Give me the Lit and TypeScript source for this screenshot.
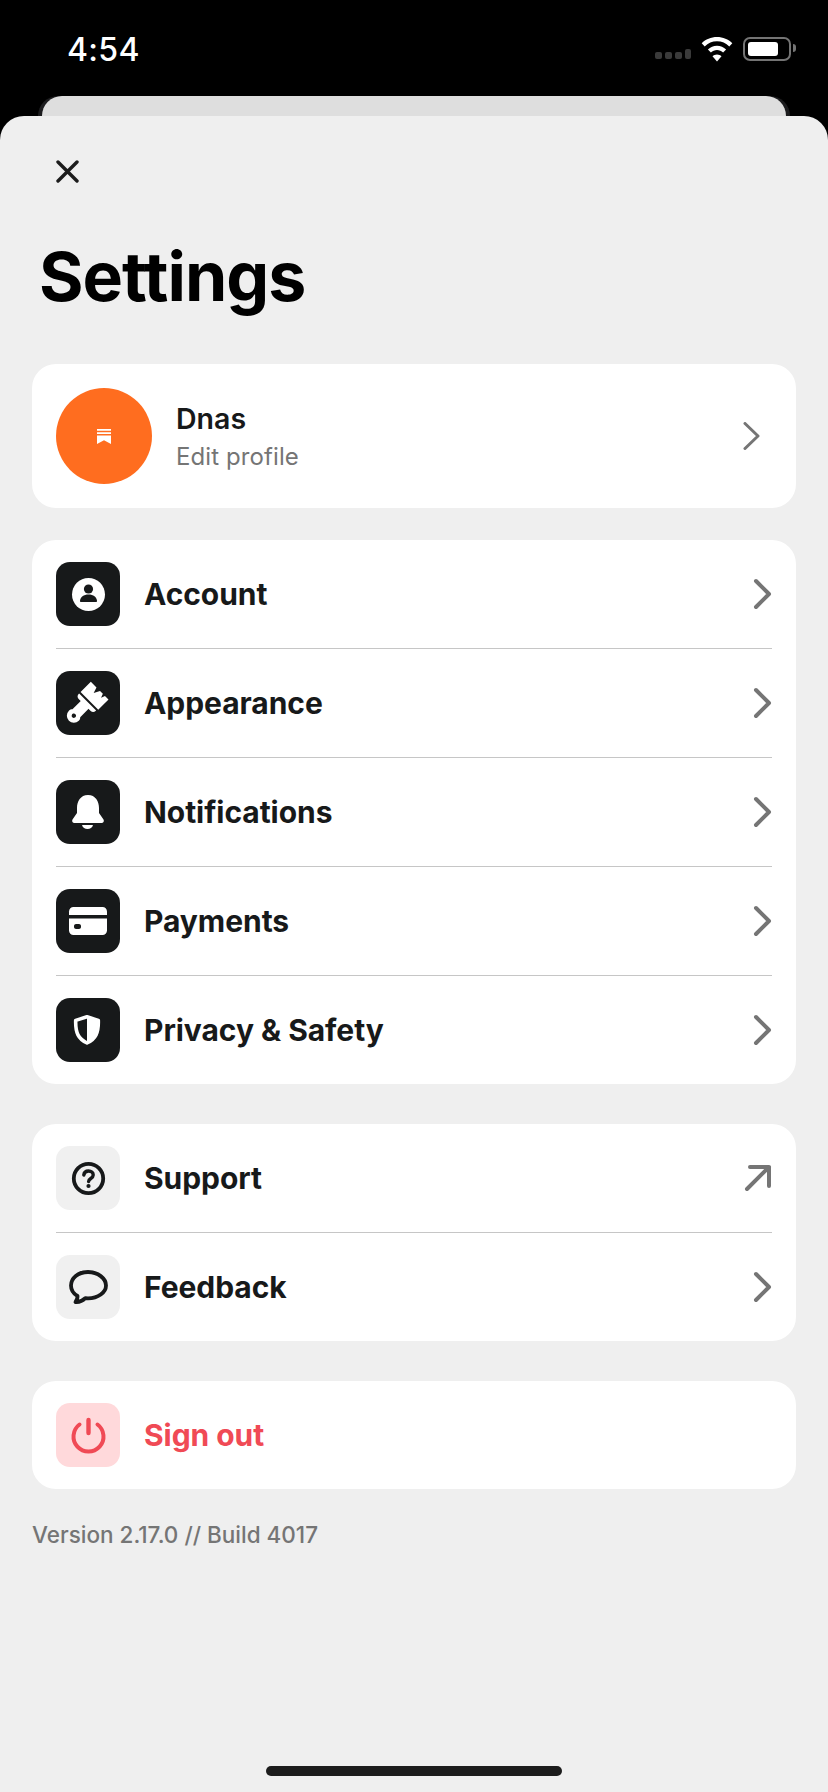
import { LitElement, html, css, svg } from "lit";
import { customElement } from "lit/decorators.js";

const ic = (c: unknown) => html`<svg class="ic" viewBox="0 0 64 64" width="64" height="64">${c}</svg>`;

const icons: Record<string, unknown> = {
  account: svg`<circle cx="32.5" cy="32.5" r="16.5" fill="#fff"/><circle cx="32.5" cy="27" r="4.6" fill="#17191a"/><path d="M25 40c-.6 0-1-.4-1-1 0-4 3.8-6.6 8.5-6.6S41 35 41 39c0 .6-.4 1-1 1z" fill="#17191a"/>`,
  brush: svg`<g transform="rotate(45 32 32)" fill="#fff"><path d="M19 15h8l2 6 3-6h4l1.500 4 1.500-4h5v14.500H19z"/><path d="M19 31.500h24v.8c0 2-1.500 3.400-3.500 3.400h-17c-2 0-3.500-1.400-3.500-3.400z"/><path fill-rule="evenodd" d="M25.500 35h11v12.500c1 1 1.500 2 1.500 3.500a7 7 0 0 1-14 0c0-1.500.5-2.500 1.500-3.500zM31 48.800a2.200 2.200 0 1 0 .01 0z"/></g>`,
  bell: svg`<path fill="#fff" d="M32 15c-7.500 0-11 6.500-11 13v5l-4.500 6.500c-1 1.800.2 3.500 2 3.500h27c1.800 0 3-1.700 2-3.500L43 33v-5c0-6.500-3.500-13-11-13z"/><path fill="#fff" d="M26 45h11c-.5 2.500-3 4-5.500 4s-5-1.500-5.500-4z"/>`,
  card: svg`<path fill="#fff" d="M13 26v-3.500c0-2.500 2-4.500 4.500-4.500h29c2.500 0 4.500 2 4.500 4.500V26z"/><path fill="#fff" fill-rule="evenodd" d="M13 29.500h38v12c0 2.500-2 4.500-4.500 4.500h-29c-2.500 0-4.500-2-4.500-4.500zM20 35c-1 0-2 .8-2 2v1c0 1.200 1 2 2 2h3c1 0 2-.8 2-2v-1c0-1.200-1-2-2-2z"/>`,
  shield: svg`<path fill="none" stroke="#fff" stroke-width="3.600" stroke-linejoin="round" d="M31 18.800l11.300 3.600c.4 12.500-2.700 18.500-11.300 22.600-8.600-4.100-11.700-10.100-11.300-22.600z"/><path fill="#fff" d="M31 18l11.800 4c.4 13-3 19.500-11.800 24z"/>`,
  help: svg`<circle cx="32.500" cy="32.500" r="14.700" fill="none" stroke="#17191a" stroke-width="3.800"/><path fill="none" stroke="#17191a" stroke-width="3.400" stroke-linecap="round" d="M27.800 29c.3-2.500 2.200-4 4.700-4 2.700 0 4.700 1.700 4.700 4 0 3.600-4.600 3.400-4.600 6.500"/><circle cx="32.500" cy="40" r="2.100" fill="#17191a"/>`,
  chat: svg`<path fill="none" stroke="#17191a" stroke-width="3.800" stroke-linejoin="round" stroke-linecap="round" d="M32 17c-10 0-17 6-17 13.500 0 4.500 2.500 8.200 6.500 10.500.3 2-.7 3.800-2 6 3.400.3 7.500-1.500 9.800-3.800 1 .2 1.700.2 2.700.2 10 0 18-5.900 18-12.900S42 17 32 17z"/>`,
  power: svg`<path fill="none" stroke="#f04a55" stroke-width="4" stroke-linecap="round" d="M23.500 21.500a15 15 0 1 0 18 0"/><path fill="none" stroke="#f04a55" stroke-width="4.400" stroke-linecap="round" d="M32.500 17v13"/>`,
};

const chevron = html`<svg class="arrow" viewBox="0 0 24 32" width="24" height="32"><path d="M5 3l13 13L5 29" fill="none" stroke="#757575" stroke-width="4" stroke-linecap="round" stroke-linejoin="round"/></svg>`;
const thinChevron = html`<svg class="arrow" viewBox="0 0 18 28" width="18" height="28"><path d="M2 1.500l13 12.500L2 26.500" fill="none" stroke="#757575" stroke-width="3" stroke-linecap="round" stroke-linejoin="round"/></svg>`;
const external = html`<svg class="arrow ext" viewBox="0 0 28 28" width="28" height="28"><path d="M3 25L25 3M6 3h19v19" fill="none" stroke="#757575" stroke-width="4" stroke-linecap="round" stroke-linejoin="round"/></svg>`;

@customElement("app-root")
export class AppRoot extends LitElement {
  static styles = css`
    :host { display: block; }
    * { box-sizing: border-box; }
    .screen { height: 1792px; background: #000; display: flex; flex-direction: column; overflow: hidden; font-family: Inter, "Noto Sans", sans-serif; }
    .status { height: 96px; flex: none; display: flex; justify-content: space-between; padding: 30px 37px 0 67px; color: #fff; }
    .time { font-size: 32px; font-weight: 500; line-height: 38px; letter-spacing: .3px; margin-top: 1px; }
    .status-icons { display: flex; height: 26px; margin-top: 6px; }
    .signal { display: flex; align-items: flex-end; gap: 3px; margin: 0 10px 0 0; padding-bottom: 3px; }
    .signal i { width: 7px; height: 7px; border-radius: 2px; background: #3a3a3a; display: block; }
    .signal i:last-child { height: 10px; width: 6px; }
    .wifi { margin-right: 10px; margin-top: 1px; }
    .battery { width: 48px; height: 24px; border: 2px solid #747474; border-radius: 7px; padding: 3px; margin-top: 1px; position: relative; }
    .battery b { display: block; width: 30px; height: 100%; background: #fff; border-radius: 3px; }
    .battery::after { content: ""; position: absolute; right: -7px; top: 5px; width: 3px; height: 8px; background: #747474; border-radius: 0 3px 3px 0; }
    .back { height: 20px; flex: none; margin: 0 38px; background: #1c1c1e; border-radius: 36px 36px 0 0; padding: 0 4px; }
    .back div { height: 100%; background: #dedede; border-radius: 33px 33px 0 0; }
    .sheet { flex: 1; background: #efefef; border-radius: 24px 24px 0 0; padding: 0 32px; display: flex; flex-direction: column; position: relative; }
    .close { margin: 44px 0 0 24px; width: 23px; height: 23px; display: block; flex: none; }
    h1 { margin: 48px 0 0 7px; font-size: 68px; line-height: 90px; font-weight: 700; color: #000; letter-spacing: -1px; height: 90px; }
    .card { background: #fff; border-radius: 24px; }
    .profile { margin-top: 43px; height: 144px; padding: 24px; display: flex; align-items: center; }
    .avatar { width: 96px; height: 96px; border-radius: 50%; background: #ff6d1f; display: flex; align-items: center; justify-content: center; flex: none; }
    .who { margin-left: 24px; flex: 1; padding-top: 4px; }
    .name { font-size: 28.500px; font-weight: 600; line-height: 38px; color: #17191a; }
    .edit { font-size: 24px; font-weight: 400; line-height: 38px; color: #757575; letter-spacing: .1px; }
    .profile .arrow { margin-right: 11px; }
    .list { margin-top: 32px; padding: 0 24px; }
    .list.gap { margin-top: 40px; }
    .row { display: flex; align-items: center; height: 108px; }
    .row + .row { height: 109px; border-top: 1px solid #c6c6c6; }
    .tile { width: 64px; height: 64px; border-radius: 14px; background: #17191a; flex: none; display: block; }
    .tile.light { background: #f0f0f0; }
    .tile.red { background: #ffd9db; }
    .ic { display: block; }
    .label { margin-left: 24px; flex: 1; font-size: 30px; font-weight: 700; color: #17191a; line-height: 40px; letter-spacing: -.05px; }
    .label.red { color: #f04a55; }
    .row .arrow { margin-right: -3px; }
    .row .arrow.ext { margin-right: 0; }
    .version { margin-top: 30px; font-size: 22.500px; line-height: 32px; font-weight: 500; color: #757575; letter-spacing: 0; }
    .spacer { flex: 1; }
    .home { width: 296px; height: 10px; border-radius: 5px; background: #1c1c1c; margin: 0 auto 16px; }
  `;

  private row(key: string, label: string, end: unknown, tone = "") {
    return html`<div class="row">
      <div class="tile ${tone}">${ic(icons[key])}</div>
      <div class="label ${tone === "red" ? "red" : ""}">${label}</div>
      ${end}
    </div>`;
  }

  render() {
    return html`<div class="screen">
      <div class="status">
        <div class="time">4:54</div>
        <div class="status-icons">
          <div class="signal"><i></i><i></i><i></i><i></i></div>
          <svg class="wifi" viewBox="0 0 32 25" width="32" height="25"><path fill="#fff" d="M16 0C10 0 4.700 2.300.7 6.200l3 3.200C7 6.200 11.300 4.300 16 4.300s9 1.900 12.300 5.100l3-3.200C27.300 2.300 22 0 16 0z"/><path fill="#fff" d="M16 8.700c-3.500 0-6.700 1.400-9.100 3.700l3 3.100c1.600-1.500 3.800-2.500 6.100-2.500s4.500 1 6.100 2.500l3-3.100c-2.400-2.300-5.600-3.700-9.100-3.700z"/><path fill="#fff" d="M16 17.500c-1.800 0-3.300.7-4.500 1.800L16 24.500l4.500-5.200c-1.200-1.100-2.700-1.800-4.500-1.800z"/></svg>
          <div class="battery"><b></b></div>
        </div>
      </div>
      <div class="back"><div></div></div>
      <div class="sheet">
        <svg class="close" viewBox="0 0 23 23"><path d="M2 2l19 19M21 2L2 21" fill="none" stroke="#1c1c1c" stroke-width="3.400" stroke-linecap="round"/></svg>
        <h1>Settings</h1>
        <div class="card profile">
          <div class="avatar">
            <svg viewBox="0 0 14 15" width="14" height="15"><path fill="#fff" d="M0 0h14v1.800H0zM0 3.300h14v1.800H0zM0 6.600h14V15l-7-3.800L0 15z"/></svg>
          </div>
          <div class="who">
            <div class="name">Dnas</div>
            <div class="edit">Edit profile</div>
          </div>
          ${thinChevron}
        </div>
        <div class="card list">
          ${this.row("account", "Account", chevron)}
          ${this.row("brush", "Appearance", chevron)}
          ${this.row("bell", "Notifications", chevron)}
          ${this.row("card", "Payments", chevron)}
          ${this.row("shield", "Privacy & Safety", chevron)}
        </div>
        <div class="card list gap">
          ${this.row("help", "Support", external, "light")}
          ${this.row("chat", "Feedback", chevron, "light")}
        </div>
        <div class="card list gap">
          ${this.row("power", "Sign out", "", "red")}
        </div>
        <div class="version">Version 2.17.0 // Build 4017</div>
        <div class="spacer"></div>
        <div class="home"></div>
      </div>
    </div>`;
  }
}
